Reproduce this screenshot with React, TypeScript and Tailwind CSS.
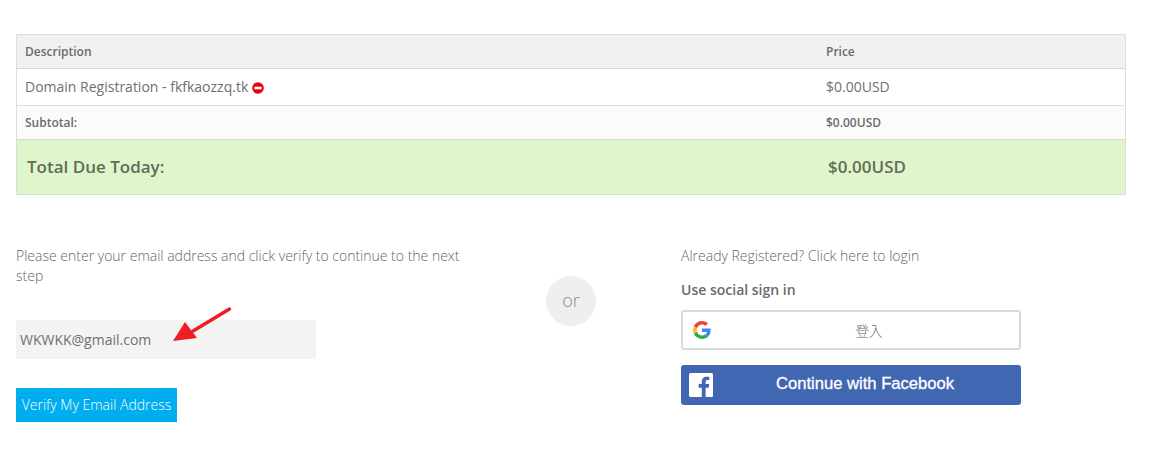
export default function App() {
  return (
    <div className="w-[1153px] h-[460px] bg-white overflow-hidden px-4 pt-[34px] text-[#58595b] [font-family:'Open_Sans',sans-serif]">
      <div className="w-[1110px] border border-[#dddddd] border-b-[#d5e3c8]">
        <div className="grid grid-cols-[801px_1fr] h-[34px] bg-[#f1f1f1] border-b border-[#d6d6d6] items-center text-[12px] font-semibold text-[#6b6b6b] leading-none">
          <div className="pl-2">Description</div>
          <div className="pl-2">Price</div>
        </div>
        <div className="grid grid-cols-[801px_1fr] h-[37px] bg-white border-b border-[#e0e0e0] items-center text-[14px] text-[#707070] leading-none">
          <div className="pl-2 flex items-center gap-1">
            <span>Domain Registration - fkfkaozzq.tk</span>
            <svg width="12" height="12" viewBox="0 0 12 12" className="mt-px">
              <circle cx="6" cy="6" r="5.8" fill="#e8000d" />
              <rect x="2.4" y="4.7" width="7.2" height="2.6" fill="#fff" />
            </svg>
          </div>
          <div className="pl-2">$0.00USD</div>
        </div>
        <div className="grid grid-cols-[801px_1fr] h-[34px] bg-[#fbfbfb] border-b border-[#d8d8d8] items-center text-[12px] font-semibold text-[#6b6b6b] leading-none">
          <div className="pl-2">Subtotal:</div>
          <div className="pl-2">$0.00USD</div>
        </div>
        <div className="grid grid-cols-[801px_1fr] h-[54px] bg-[#dff5cb] items-center pb-[2px] text-[17px] font-semibold text-[#626c59] leading-none">
          <div className="pl-[10px]">Total Due Today:</div>
          <div className="pl-[10px]">$0.00USD</div>
        </div>
      </div>

      <div className="flex mt-[50px]">
        <div className="w-[465px]">
          <p className="text-[14px] leading-[20px] font-light text-[#666] mt-px">
            Please enter your email address and click verify to continue to the next step
          </p>
          <div className="relative mt-[34px] w-[300px] h-[39px] bg-[#f3f3f3] flex items-center pl-1 text-[14px] text-[#707070]">
            WKWKK@gmail.com
            <svg width="62" height="42" viewBox="0 0 62 42" className="absolute left-[155px] top-[-14px]">
              <path d="M58.5 3 L22 25" stroke="#ee1c25" strokeWidth="3.4" strokeLinecap="round" fill="none" />
              <path d="M2 35 L14 16 L26 32 Z" fill="#ee1c25" />
            </svg>
          </div>
          <button className="mt-[29px] block h-[34px] w-[161px] bg-[#00aeef] text-white text-[14px] font-light text-center leading-none">
            Verify My Email Address
          </button>
        </div>

        <div className="w-[200px] flex justify-center">
          <div className="mt-[31px] ml-[-20px] w-[50px] h-[50px] rounded-full bg-[#efefef] flex items-center justify-center text-[18px] font-light text-[#8a8a8a] leading-none pb-[3px]">
            or
          </div>
        </div>

        <div className="w-[340px]">
          <p className="text-[14px] leading-[20px] font-light text-[#666] mt-px">
            Already Registered? Click here to login
          </p>
          <p className="mt-[14px] text-[14px] leading-[20px] font-semibold text-[#6b6b6b]">Use social sign in</p>
          <div className="relative mt-[10px] h-[40px] w-[340px] border-2 border-[#dadada] rounded-[3px] bg-white flex items-center justify-center pl-9 pt-[1px] text-[13.5px] font-light text-[#666] [font-family:'Noto_Sans_CJK_TC',sans-serif]">
            <svg width="18" height="18" viewBox="0 0 48 48" className="absolute left-[10px] top-[9px]">
              <path fill="#EA4335" d="M24 9.5c3.54 0 6.71 1.22 9.21 3.6l6.85-6.85C35.9 2.38 30.47 0 24 0 14.62 0 6.51 5.38 2.56 13.22l7.98 6.19C12.43 13.72 17.74 9.5 24 9.5z" />
              <path fill="#4285F4" d="M46.98 24.55c0-1.57-.15-3.09-.38-4.55H24v9.02h12.94c-.58 2.96-2.26 5.48-4.78 7.18l7.73 6c4.51-4.18 7.09-10.36 7.09-17.65z" />
              <path fill="#FBBC05" d="M10.53 28.59c-.48-1.45-.76-2.99-.76-4.59s.27-3.14.76-4.59l-7.98-6.19C.92 16.46 0 20.12 0 24c0 3.88.92 7.54 2.56 10.78l7.97-6.19z" />
              <path fill="#34A853" d="M24 48c6.48 0 11.93-2.13 15.89-5.81l-7.73-6c-2.15 1.45-4.92 2.3-8.16 2.3-6.26 0-11.57-4.22-13.47-9.91l-7.98 6.19C6.51 42.62 14.62 48 24 48z" />
            </svg>
            登入
          </div>
          <div className="relative mt-[15px] h-[40px] w-[340px] rounded-[3px] bg-[#4267b2] flex items-center justify-center pl-7 pb-[2px] text-white text-[16.6px] font-normal [font-family:'Liberation_Sans',sans-serif] [-webkit-text-stroke:0.3px_white]">
            <svg width="24" height="24" viewBox="0 0 24 24" className="absolute left-[8px] top-[8px]">
              <rect width="24" height="24" rx="1.5" fill="#fff" />
              <path d="M16.6 24v-9.3h3.1l.5-3.6h-3.6V8.8c0-1 .3-1.8 1.8-1.8h1.9V3.8c-.3 0-1.5-.1-2.8-.1-2.8 0-4.7 1.7-4.7 4.8v2.6H9.6v3.6h3.2V24z" fill="#4267b2" />
            </svg>
            Continue with Facebook
          </div>
        </div>
      </div>
    </div>
  );
}
